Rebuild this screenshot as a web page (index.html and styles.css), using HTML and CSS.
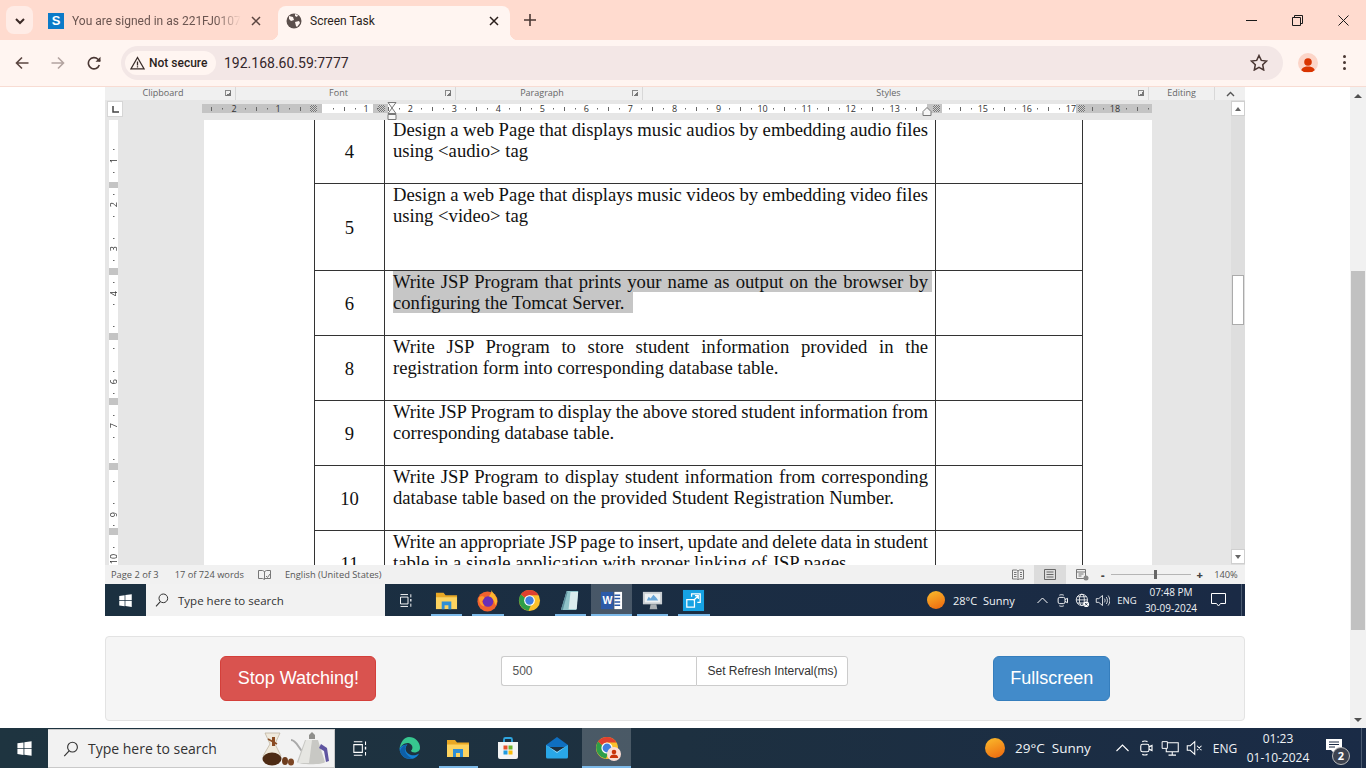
FILE: index.html
```html
<!DOCTYPE html>
<html lang="en">
<head>
  <meta charset="UTF-8">
  <meta name="viewport" content="width=device-width, initial-scale=1.0">
  <title>Screen Task</title>
  <link rel="stylesheet" href="styles.css">
</head>
<body>

  <!-- shared icons -->
  <svg class="sprite" aria-hidden="true">
    <symbol id="i-win" viewBox="0 0 24 24"><path fill="#fff" d="M2 4.6l8.6-1.2v8.2H2zM11.8 3.2L22 1.8v9.8H11.8zM2 12.8h8.6V21L2 19.8zM11.8 12.8H22v9.4l-10.2-1.4z"/></symbol>
    <symbol id="i-search" viewBox="0 0 24 24"><circle cx="14" cy="9.5" r="6.5" fill="none" stroke="currentColor" stroke-width="1.5"/><path d="M9.5 14.5L3 21.5" stroke="currentColor" stroke-width="1.6" fill="none"/></symbol>
    <symbol id="i-taskview" viewBox="0 0 24 24"><path fill="none" stroke="#fff" stroke-width="1.5" d="M4 2.5h12M4 21.5h12M4 6.5h12v11H4zM20.5 2v5M20.5 17v5"/><path stroke="#fff" stroke-width="2" d="M20.5 9.5v4"/></symbol>
    <symbol id="i-chrome" viewBox="0 0 24 24"><circle cx="12" cy="12" r="11" fill="#fbc02d"/><path fill="#2e9e49" d="M3 5.6l6 5 5 5-3 7A11 11 0 0 1 3 5.6z"/><path fill="#e0402f" d="M12 1a11 11 0 0 1 9.53 5.5H12a5.5 5.5 0 0 0-4.76 2.75L3 5.6A11 11 0 0 1 12 1z"/><circle cx="12" cy="12" r="5.6" fill="#fff"/><circle cx="12" cy="12" r="4.4" fill="#3f7fe0"/></symbol>
    <symbol id="i-folder" viewBox="0 0 24 24"><path fill="#e9a825" d="M1 4h8l2 2.5h12V9H1z"/><path fill="#fdd35f" d="M1 8.5h22V21H1z"/><path fill="#2f8fd6" d="M7 13h10v8h-3v-4h-4v4H7z"/></symbol>
    <symbol id="i-edge" viewBox="0 0 24 24"><path fill="#37c68f" d="M12 1a11 11 0 0 1 11 11c0 3-3 4.500-5.500 4.500-2 0-3.500-1-3.500-2 2-1 2.500-6-2.500-7.500-4-.5-7.500 2.500-9 6C3.500 6 7 1 12 1z"/><path fill="#1380d2" d="M2.500 12.500C2.500 18 7 23 13 23c4 0 7.500-2 9-5.500-3 2.500-8.500 2.500-11.500-.5-2.500-2.500-2.500-6 0-8.500-3.500 0-6.500 1.500-8 4z"/><path fill="#0e5fa8" d="M10.500 8.500c-3 2-3.500 6.500-.5 10 1.500 2 3.500 3.500 6 4-6 1.500-11-2-13-7 .5-3.500 4-7 7.500-7z"/></symbol>
    <symbol id="i-store" viewBox="0 0 24 24"><path fill="none" stroke="#2fa6e0" stroke-width="1.8" d="M8 6V3.500A1.500 1.500 0 0 1 9.500 2h5A1.500 1.500 0 0 1 16 3.500V6"/><path fill="#f4f4f4" d="M2 6h20v15a2 2 0 0 1-2 2H4a2 2 0 0 1-2-2z"/><path fill="#e8502a" d="M7.500 9.500h4v4h-4z"/><path fill="#6cb52d" d="M12.500 9.500h4v4h-4z"/><path fill="#1f9be0" d="M7.500 14.500h4v4h-4z"/><path fill="#fbbd09" d="M12.500 14.500h4v4h-4z"/></symbol>
    <symbol id="i-mail" viewBox="0 0 24 24"><path fill="#0f6fc0" d="M1 9l11-8 11 8v2H1z"/><path fill="#29a7e8" d="M1 9l11 7 11-7v12a1.500 1.500 0 0 1-1.500 1.500h-19A1.500 1.500 0 0 1 1 21z"/><path fill="#9fdcf8" d="M1 9l11 7 11-7-11 8z"/></symbol>
    <symbol id="i-firefox" viewBox="0 0 24 24"><circle cx="12" cy="13" r="10.500" fill="#f2622e"/><path fill="#fdb52e" d="M16 1c1 3 5 5 6 10 .5 3-1 5-2 6-1-6-4-9-7-9 2-2 3.500-4 3-7z"/><circle cx="12.500" cy="13" r="5.500" fill="#6b2fb5"/><path fill="#ff9a2e" d="M3 9c2-2 5-2 6 0l-3 4 3 5c-3 0-6-3-6-9z"/></symbol>
    <symbol id="i-note" viewBox="0 0 24 24"><path fill="#8fc3c9" d="M8 2h12l-2 20H2z"/><path fill="#dceced" d="M12 3h8l-1.500 18H10z"/><path fill="#5d8f9c" d="M2 22L8 2l1 1-5 19z"/></symbol>
    <symbol id="i-word" viewBox="0 0 24 24"><path fill="#2c5aa8" d="M1 3h13v18H1z"/><text x="2.500" y="16" font-family="Liberation Sans" font-size="11" font-weight="700" fill="#fff">W</text><path fill="#fff" d="M15 3h8v18h-8z"/><path stroke="#2c5aa8" stroke-width="1.500" d="M15 6.500h6M15 10h6M15 13.500h6M15 17h6"/></symbol>
    <symbol id="i-monitor" viewBox="0 0 24 24"><path fill="#c9ced2" d="M2 3h20v13H2z"/><path fill="#eef2f4" d="M4 5h16v9H4z"/><path fill="#6aa7d8" d="M6 12l2-4 2 2 3-4 3 3 2 3z"/><path fill="#aab0b4" d="M10 16h6l1 5H9z"/></symbol>
    <symbol id="i-remote" viewBox="0 0 24 24"><path fill="#17a2e3" d="M1 1h22v22H1z"/><path fill="none" stroke="#fff" stroke-width="1.300" d="M5 11h8v8H5zM10 8V5h9v9h-3M12 12l5-5M13.500 7H17v3.500"/></symbol>
    <symbol id="i-meet" viewBox="0 0 24 24"><rect x="5" y="7" width="11" height="10" rx="2.500" fill="none" stroke="#fff" stroke-width="1.500"/><path fill="none" stroke="#fff" stroke-width="1.500" d="M16 10.500l4-2v7l-4-2M7 3.500c2-1 5-1 7 0M7 20.500c2 1 5 1 7 0"/></symbol>
    <symbol id="i-globe" viewBox="0 0 24 24"><g fill="none" stroke="#fff" stroke-width="1.300"><circle cx="11" cy="11" r="9"/><ellipse cx="11" cy="11" rx="4" ry="9"/><path d="M2 11h18M3.500 6h15M3.500 16h15"/></g><circle cx="18" cy="18" r="4.500" fill="#fff"/><path stroke="#1b2b44" stroke-width="1.300" d="M16 16l4 4M20 16l-4 4"/></symbol>
    <symbol id="i-speaker" viewBox="0 0 24 24"><path fill="none" stroke="#fff" stroke-width="1.300" d="M2 9h4l6-5v16l-6-5H2zM15 9c1.500 2 1.500 4 0 6M18 6.500c2.500 3.500 2.500 7.500 0 11M21 4c3.500 5 3.500 11 0 16"/></symbol>
    <symbol id="i-mute" viewBox="0 0 24 24"><path fill="none" stroke="#fff" stroke-width="1.400" d="M3 9h4l6-5.500v17L7 15H3zM16 9l6 6M22 9l-6 6"/></symbol>
    <symbol id="i-net" viewBox="0 0 24 24"><path fill="none" stroke="#fff" stroke-width="1.400" d="M7 5h16v12H7zM15 17v4M10 21.500h10"/><path fill="#1b2b44" stroke="#fff" stroke-width="1.300" d="M1.500 3.500h7v9h-7z"/></symbol>
    <symbol id="i-sun" viewBox="0 0 24 24"><circle cx="12" cy="12" r="12" fill="url(#sun-fill)"/></symbol>
    <linearGradient id="sun-fill" x1="0.300" y1="0" x2="0.700" y2="1"><stop offset="0" stop-color="#f9b52a"/><stop offset="1" stop-color="#ee6c10"/></linearGradient>
  </svg>

  <!-- browser tabs -->
  <div class="tab-strip">
    <button class="tab-search"><svg width="10" height="7" viewBox="0 0 10 7"><path d="M1 1l4 4 4-4" fill="none" stroke="#3b2a26" stroke-width="2"/></svg></button>
    <div class="tab">
      <span class="favicon-s">S</span>
      <span class="tab-title tab-title-fade">You are signed in as 221FJ01071</span>
      <svg class="tab-close" viewBox="0 0 10 10"><path d="M1 1l8 8M9 1l-8 8" stroke="#5b4540" stroke-width="1.500"/></svg>
    </div>
    <div class="tab tab-active">
      <svg class="favicon" viewBox="0 0 16 16"><circle cx="8" cy="8" r="7.500" fill="#5b4f4c"/><path fill="#fff5f1" d="M3 3l4 1 1 3-3 1-2-2zM9 9l4-1 1 2-3 4-1-1zM9 1l3 1-1 2-2-1z"/></svg>
      <span class="tab-title">Screen Task</span>
      <svg class="tab-close" viewBox="0 0 10 10"><path d="M1 1l8 8M9 1l-8 8" stroke="#2b1f1c" stroke-width="1.500"/></svg>
    </div>
    <button class="tab-new"><svg width="12" height="12" viewBox="0 0 12 12"><path d="M6 0v12M0 6h12" stroke="#4a3733" stroke-width="1.600"/></svg></button>
    <div class="win-controls">
      <span class="win-btn"><svg width="11" height="11" viewBox="0 0 11 11"><path d="M0 5.500h11" stroke="#1a1a1a"/></svg></span>
      <span class="win-btn"><svg width="11" height="11" viewBox="0 0 11 11"><path d="M.5 2.500h8v8h-8zM2.500 2.500V.5h8v8h-2" fill="none" stroke="#1a1a1a"/></svg></span>
      <span class="win-btn"><svg width="11" height="11" viewBox="0 0 11 11"><path d="M.5.5l10 10M10.500.5l-10 10" stroke="#1a1a1a"/></svg></span>
    </div>
  </div>

  <!-- browser toolbar -->
  <div class="toolbar">
    <span class="nav-btn"><svg width="14" height="14" viewBox="0 0 14 14"><path d="M13.500 7H1.500M7 1.500L1.500 7 7 12.500" fill="none" stroke="#5b4540" stroke-width="1.600"/></svg></span>
    <span class="nav-btn"><svg width="14" height="14" viewBox="0 0 14 14"><path d="M.5 7h12M7 1.500L12.500 7 7 12.500" fill="none" stroke="#b3a3a0" stroke-width="1.600"/></svg></span>
    <span class="nav-btn"><svg width="14" height="14" viewBox="0 0 14 14"><path d="M12.300 9A5.600 5.600 0 1 1 11 3.300L13 5.200" fill="none" stroke="#4a3733" stroke-width="1.600"/><path d="M13.500.8v5h-5z" fill="#4a3733"/></svg></span>
    <div class="address">
      <span class="secure-pill">
        <svg width="15" height="14" viewBox="0 0 15 14"><path d="M7.500 1.500L14 12.800H1zM7.500 5.500v4M7.500 10.300v1.200" fill="none" stroke="#3a2d2a" stroke-width="1.300"/></svg>
        Not secure
      </span>
      <span class="url">192.168.60.59:7777</span>
      <svg class="star" width="18" height="17" viewBox="0 0 18 17"><path d="M9 1.500l2.300 4.900 5.200.7-3.800 3.600 1 5.300L9 13.400 4.300 16l1-5.300L1.500 7.100l5.200-.7z" fill="none" stroke="#4a3733" stroke-width="1.500"/></svg>
    </div>
    <span class="avatar"><svg width="16" height="15" viewBox="0 0 16 15"><circle cx="8" cy="4" r="3.800" fill="#d93400"/><path d="M1 14c0-4 3-5.500 7-5.500s7 1.500 7 5.500z" fill="#d93400"/></svg></span>
    <span class="kebab"><i></i><i></i><i></i></span>
  </div>

  <!-- page -->
  <div class="page">
    <div class="container">

      <!-- shared remote screen -->
      <div class="remote">
        <div class="ribbon">
          <div class="ribbon-group ribbon-clip"><span class="ribbon-label">Clipboard</span><i class="launcher"></i></div>
          <div class="ribbon-group ribbon-font"><span class="ribbon-label">Font</span><i class="launcher"></i></div>
          <div class="ribbon-group ribbon-para"><span class="ribbon-label">Paragraph</span><i class="launcher"></i></div>
          <div class="ribbon-group ribbon-styles"><span class="ribbon-label">Styles</span><i class="launcher"></i></div>
          <div class="ribbon-group ribbon-edit"><span class="ribbon-label">Editing</span></div>
          <div class="ribbon-collapse"><svg width="9" height="6" viewBox="0 0 9 6"><path d="M1 5l3.500-3.500L8 5" fill="none" stroke="#555" stroke-width="1.400"/></svg></div>
        </div>

        <div class="word-body">
          <div class="word-main">
            <div class="ruler-row">
              <span class="tab-corner"><svg width="7" height="7" viewBox="0 0 7 7"><path d="M1 0v6h6" fill="none" stroke="#444" stroke-width="1.500"/></svg></span>
              <div class="h-ruler">
                <span>2</span><span>1</span><span></span><span>1</span><span>2</span><span>3</span><span>4</span><span>5</span><span>6</span><span>7</span><span>8</span><span>9</span><span>10</span><span>11</span><span>12</span><span>13</span><span></span><span>15</span><span>16</span><span>17</span><span>18</span>
                <i class="col-mark col-mark-1"></i>
                <i class="col-mark col-mark-2"></i>
                <i class="col-mark col-mark-3"></i>
                <i class="col-mark col-mark-4"></i>
                <svg class="indent-left" width="10" height="19" viewBox="0 0 10 19"><path d="M1 .5h8L5 6zM5 6l4 5.500H1zM1 12.500h8v5H1z" fill="#f6f6f6" stroke="#777"/></svg>
                <svg class="indent-right" width="10" height="9" viewBox="0 0 10 9"><path d="M5 .5l4 4v4H1v-4z" fill="#f6f6f6" stroke="#777"/></svg>
              </div>
            </div>
            <div class="doc-row">
              <div class="v-ruler">
                <span>1</span><span>2</span><span>3</span><span>4</span><span></span><span>6</span><span>7</span><span></span><span>9</span><span>10</span>
              </div>
              <div class="doc-page">
                <table class="task-table">
                  <colgroup><col class="col-no"><col class="col-task"><col class="col-sign"></colgroup>
                  <tr class="row-md">
                    <td class="no">4</td>
                    <td class="task"><span class="ln">Design a web Page that displays music audios by embedding audio files</span> using &lt;audio&gt; tag</td>
                    <td></td>
                  </tr>
                  <tr class="row-lg">
                    <td class="no">5</td>
                    <td class="task"><span class="ln">Design a web Page that displays music videos by embedding video files</span> using &lt;video&gt; tag</td>
                    <td></td>
                  </tr>
                  <tr class="row-md">
                    <td class="no">6</td>
                    <td class="task"><span class="ln"><span class="sel">Write JSP Program that prints your name as output on the browser by</span></span> <span class="sel">configuring the Tomcat Server.&nbsp;</span></td>
                    <td></td>
                  </tr>
                  <tr class="row-md">
                    <td class="no">8</td>
                    <td class="task"><span class="ln">Write JSP Program to store student information provided in the</span> registration form into corresponding database table.</td>
                    <td></td>
                  </tr>
                  <tr class="row-md">
                    <td class="no">9</td>
                    <td class="task"><span class="ln">Write JSP Program to display the above stored student information from</span> corresponding database table.</td>
                    <td></td>
                  </tr>
                  <tr class="row-md">
                    <td class="no">10</td>
                    <td class="task"><span class="ln">Write JSP Program to display student information from corresponding</span> database table based on the provided Student Registration Number.</td>
                    <td></td>
                  </tr>
                  <tr class="row-md">
                    <td class="no">11</td>
                    <td class="task"><span class="ln">Write an appropriate JSP page to insert, update and delete data in student</span> table in a single application with proper linking of JSP pages.</td>
                    <td></td>
                  </tr>
                </table>
              </div>
            </div>
          </div>
          <div class="word-scroll">
            <span class="word-arrow"><i class="tri-up"></i></span>
            <span class="word-thumb"></span>
            <span class="word-arrow word-arrow-end"><i class="tri-down"></i></span>
          </div>
        </div>

        <div class="status-bar">
          <span class="status-page">Page 2 of 3</span>
          <span class="status-words">17 of 724 words</span>
          <svg class="status-proof" width="13" height="12" viewBox="0 0 13 12"><path d="M.5 1.500h4l2 1v8l-2-1h-4zM6.500 2.500l2-1h4v8h-6M8 7l1.500 1.500L12 5" fill="none" stroke="#777"/></svg>
          <span class="status-lang">English (United States)</span>
          <div class="status-right">
            <span class="view-btn"><svg width="12" height="11" viewBox="0 0 12 11"><path d="M.5 1h4l1.500 1 1.500-1h4v9h-4L6 11 4.500 10h-4zM6 2v8M2 3.500h2.500M2 5.500h2.500M2 7.500h2.500M8 3.500h2M8 5.500h2M8 7.500h2" fill="none" stroke="#777"/></svg></span>
            <span class="view-btn view-btn-on"><svg width="12" height="11" viewBox="0 0 12 11"><path d="M.5.5h11v10H.5zM2.500 3h7M2.500 5.500h7M2.500 8h7" fill="none" stroke="#666"/></svg></span>
            <span class="view-btn"><svg width="13" height="12" viewBox="0 0 13 12"><path d="M.5.5h9v9h-9zM.5 3h9M2.500 5h5M2.500 7h3" fill="none" stroke="#777"/><circle cx="10" cy="9" r="2.500" fill="#888"/></svg></span>
            <div class="zoom-ctl">
              <b>-</b>
              <span class="zoom-track"><i></i></span>
              <b>+</b>
            </div>
            <span class="zoom-pct">140%</span>
          </div>
        </div>

        <!-- taskbar of the shared machine -->
        <div class="taskbar taskbar-inner">
          <span class="tb-start"><svg><use href="#i-win"/></svg></span>
          <div class="tb-search">
            <svg class="tb-search-icon"><use href="#i-search"/></svg>
            <span>Type here to search</span>
          </div>
          <span class="tb-item tb-taskview"><svg><use href="#i-taskview"/></svg></span>
          <span class="tb-item tb-open"><svg><use href="#i-folder"/></svg></span>
          <span class="tb-item tb-open"><svg><use href="#i-firefox"/></svg></span>
          <span class="tb-item"><svg><use href="#i-chrome"/></svg></span>
          <span class="tb-item tb-open"><svg><use href="#i-note"/></svg></span>
          <span class="tb-item tb-open tb-active"><svg><use href="#i-word"/></svg></span>
          <span class="tb-item tb-open"><svg><use href="#i-monitor"/></svg></span>
          <span class="tb-item tb-open"><svg><use href="#i-remote"/></svg></span>
          <div class="tray">
            <svg class="tray-sun"><use href="#i-sun"/></svg>
            <span class="tray-weather">28°C&nbsp; Sunny</span>
            <span class="tray-icon"><svg width="11" height="7" viewBox="0 0 11 7"><path d="M.5 6l5-5 5 5" fill="none" stroke="#fff"/></svg></span>
            <span class="tray-icon"><svg class="tray-glyph"><use href="#i-meet"/></svg></span>
            <span class="tray-icon"><svg class="tray-glyph"><use href="#i-globe"/></svg></span>
            <span class="tray-icon"><svg class="tray-glyph"><use href="#i-speaker"/></svg></span>
            <span class="tray-lang">ENG</span>
            <span class="tray-clock">07:48 PM<br>30-09-2024</span>
            <span class="tray-notify"><svg width="15" height="14" viewBox="0 0 15 14"><path d="M.5.5h14v10H9.500l-2 2.500-2-2.500h-5z" fill="none" stroke="#fff"/></svg></span>
            <span class="tray-desktop"></span>
          </div>
        </div>
      </div>

      <!-- controls -->
      <div class="panel">
        <div class="panel-cell">
          <button class="btn btn-lg btn-stop">Stop Watching!</button>
        </div>
        <div class="panel-cell">
          <div class="input-group">
            <input type="text" value="500">
            <button class="btn btn-set">Set Refresh Interval(ms)</button>
          </div>
        </div>
        <div class="panel-cell">
          <button class="btn btn-lg btn-full">Fullscreen</button>
        </div>
      </div>
    </div>

    <div class="page-scroll">
      <span class="page-arrow"><i class="tri-up"></i></span>
      <span class="page-track"><span class="page-thumb"></span></span>
      <span class="page-arrow"><i class="tri-down"></i></span>
    </div>
  </div>

  <!-- windows taskbar -->
  <div class="taskbar taskbar-outer">
    <span class="tb-start"><svg><use href="#i-win"/></svg></span>
    <div class="tb-search">
      <svg class="tb-search-icon"><use href="#i-search"/></svg>
      <span>Type here to search</span>
      <svg class="tb-coffee" width="68" height="34" viewBox="0 0 68 34">
        <path d="M3 1h15l-5 11 6 12H1l7-12z" fill="#efe9dc" stroke="#b9ad98" stroke-width=".7"/>
        <path d="M10 5h3v9h-3z" fill="#8a4b22"/>
        <path d="M6 7l9 5" stroke="#8a4b22" stroke-width="1.500"/>
        <ellipse cx="10" cy="27" rx="9.500" ry="6.500" fill="#4d2a13"/>
        <ellipse cx="23" cy="29" rx="3" ry="4" fill="#6d3c1d"/>
        <ellipse cx="29" cy="30" rx="3" ry="3.500" fill="#7c4624"/>
        <path d="M29 8c5 0 7 7 11 11" fill="none" stroke="#a9a9a9" stroke-width="2"/>
        <path d="M43 8h13l7 22c-1 3-27 3-28 0z" fill="#c8c8c4"/>
        <path d="M44 8h6l-3 23h-11z" fill="#e6e6e2"/>
        <path d="M47 3l3-3 3 3v4h-6z" fill="#8f8f8c"/>
        <path d="M59 12l6 4 2 13-3 1-2-11-5-3z" fill="#5f55a0"/>
      </svg>
    </div>
    <span class="tb-item tb-taskview"><svg><use href="#i-taskview"/></svg></span>
    <span class="tb-item"><svg><use href="#i-edge"/></svg></span>
    <span class="tb-item tb-open"><svg><use href="#i-folder"/></svg></span>
    <span class="tb-item"><svg><use href="#i-store"/></svg></span>
    <span class="tb-item"><svg><use href="#i-mail"/></svg></span>
    <span class="tb-item tb-open tb-active tb-profile">
      <svg><use href="#i-chrome"/></svg>
      <svg class="tb-badge" viewBox="0 0 14 14"><circle cx="7" cy="7" r="7" fill="#fbdcd3"/><circle cx="7" cy="5" r="2.300" fill="#c9340a"/><path d="M2.800 11c0-2.500 2-3.500 4.200-3.500s4.200 1 4.200 3.500z" fill="#c9340a"/></svg>
    </span>
    <div class="tray">
      <svg class="tray-sun"><use href="#i-sun"/></svg>
      <span class="tray-weather">29°C&nbsp; Sunny</span>
      <span class="tray-icon"><svg width="13" height="8" viewBox="0 0 13 8"><path d="M.5 7l6-6 6 6" fill="none" stroke="#fff" stroke-width="1.100"/></svg></span>
      <span class="tray-icon"><svg class="tray-glyph"><use href="#i-meet"/></svg></span>
      <span class="tray-icon"><svg class="tray-glyph"><use href="#i-net"/></svg></span>
      <span class="tray-icon"><svg class="tray-glyph"><use href="#i-mute"/></svg></span>
      <span class="tray-lang">ENG</span>
      <span class="tray-clock">01:23<br>01-10-2024</span>
      <span class="tray-notify">
        <svg class="notify-icon" width="16" height="14" viewBox="0 0 16 14"><path d="M0 0h16v11h-5l-3 3-3-3H0z" fill="#fff"/><path d="M3 3h10M3 5.500h10M3 8h6" stroke="#1b2b44"/></svg>
        <b class="notify-count">2</b>
      </span>
      <span class="tray-desktop"></span>
    </div>
  </div>

</body>
</html>
```

FILE: styles.css
```css
html,
body {
  height: 100%;
}

body {
  margin: 0;
  height: 768px;
  overflow: hidden;
  display: flex;
  flex-direction: column;
  font-family: Roboto, "Liberation Sans", sans-serif;
  background-color: #fff;
}

.sprite {
  position: absolute;
  width: 0;
  height: 0;
}

button {
  font-family: inherit;
  cursor: pointer;
}

/* browser tabs */
.tab-strip {
  height: 40px;
  flex: none;
  display: flex;
  align-items: flex-end;
  background-color: #ffdbcf;
}

.tab-search {
  width: 27px;
  height: 28px;
  margin: 0 7px 6px 6px;
  padding: 0;
  border: none;
  border-radius: 8px;
  background-color: #ffece6;
}

.tab {
  width: 238px;
  height: 34px;
  box-sizing: border-box;
  padding: 0 15px 5px 8px;
  display: flex;
  align-items: center;
  gap: 8px;
  font-size: 12px;
  color: #6b5550;
}

.tab-active {
  position: relative;
  width: 232px;
  padding-right: 9px;
  border-radius: 8px 8px 0 0;
  background-color: #fff5f1;
  color: #2b1f1c;
}

.tab-active::before,
.tab-active::after {
  content: "";
  position: absolute;
  bottom: 0;
  width: 8px;
  height: 8px;
}

.tab-active::before {
  left: -8px;
  background: radial-gradient(circle at 0 0, transparent 8px, #fff5f1 8.5px);
}

.tab-active::after {
  right: -8px;
  background: radial-gradient(circle at 100% 0, transparent 8px, #fff5f1 8.5px);
}

.favicon-s {
  width: 16px;
  height: 16px;
  flex: none;
  background-color: #0b7ac8;
  color: #fff;
  font: 700 13px/16px "Liberation Sans", sans-serif;
  text-align: center;
}

.favicon {
  width: 16px;
  height: 16px;
  flex: none;
}

.tab-title {
  flex: 1;
  min-width: 0;
  white-space: nowrap;
  overflow: hidden;
}

.tab-title-fade {
  -webkit-mask-image: linear-gradient(to right, #000 85%, transparent 100%);
  mask-image: linear-gradient(to right, #000 85%, transparent 100%);
}

.tab-close {
  width: 10px;
  height: 10px;
  flex: none;
  margin: 0 2px;
}

.tab-new {
  width: 24px;
  height: 24px;
  margin: 0 0 8px 8px;
  padding: 0;
  border: none;
  background: none;
  display: flex;
  align-items: center;
  justify-content: center;
}

.win-controls {
  display: flex;
  align-self: stretch;
  margin-left: auto;
}

.win-btn {
  width: 46px;
  display: flex;
  align-items: center;
  justify-content: center;
}

/* browser toolbar */
.toolbar {
  height: 47px;
  flex: none;
  box-sizing: border-box;
  padding: 0 4px 1px;
  display: flex;
  align-items: center;
  background-color: #fff5f1;
  border-bottom: 1px solid #f8dcd3;
}

.nav-btn {
  width: 36px;
  height: 34px;
  flex: none;
  display: flex;
  align-items: center;
  justify-content: center;
}

.address {
  flex: 1;
  height: 34px;
  margin: 0 7px 0 9px;
  padding: 0 15px 0 4px;
  display: flex;
  align-items: center;
  border-radius: 17px;
  background-color: #f3e7e6;
}

.secure-pill {
  height: 24px;
  width: 91px;
  box-sizing: border-box;
  padding-left: 5px;
  display: flex;
  align-items: center;
  gap: 4px;
  border-radius: 12px;
  background-color: #fff5f1;
  font-size: 12px;
  font-weight: 500;
  color: #2b1f1c;
}

.url {
  margin-left: 8px;
  font-size: 14px;
  color: #33262a;
}

.star {
  margin-left: auto;
}

.avatar {
  width: 20px;
  height: 20px;
  margin: 0 8px;
  flex: none;
  display: flex;
  align-items: flex-end;
  justify-content: center;
  border-radius: 50%;
  background-color: #fcd5c8;
  overflow: hidden;
}

.kebab {
  width: 36px;
  flex: none;
  display: flex;
  flex-direction: column;
  align-items: center;
  gap: 3px;
}

.kebab i {
  width: 3px;
  height: 3px;
  border-radius: 50%;
  background-color: #4a3733;
}

/* page */
.page {
  height: 641px;
  flex: none;
  display: flex;
}

.container {
  width: 1140px;
  margin: 0 auto;
}

.page-scroll {
  width: 16px;
  flex: none;
  display: flex;
  flex-direction: column;
  background-color: #f1f1f1;
}

.page-arrow {
  height: 17px;
  flex: none;
  display: flex;
  align-items: center;
  justify-content: center;
}

.page-track {
  flex: 1;
}

.page-thumb {
  display: block;
  height: 359px;
  margin: 167px 1px 0;
  background-color: #c1c1c1;
}

.tri-up,
.tri-down {
  width: 0;
  height: 0;
  border-left: 4px solid transparent;
  border-right: 4px solid transparent;
}

.tri-up {
  border-bottom: 4px solid #505050;
}

.tri-down {
  border-top: 4px solid #505050;
}

/* remote screen */
.remote {
  height: 529px;
  display: flex;
  flex-direction: column;
  font-family: "Open Sans", "Liberation Sans", sans-serif;
  background-color: #e6e6e6;
}

.ribbon {
  height: 13px;
  flex: none;
  display: flex;
  background-color: #f0f0f0;
  color: #666;
  font-size: 9px;
  line-height: 11px;
}

.ribbon-group {
  display: flex;
  align-items: flex-start;
  box-sizing: border-box;
  border-right: 1px solid #d8d8d8;
}

.ribbon-clip { width: 131px; }
.ribbon-font { width: 220px; }
.ribbon-para { width: 187px; }
.ribbon-styles { width: 506px; }
.ribbon-edit { width: 66px; }

.ribbon-label {
  flex: 1;
  text-align: center;
}

.launcher {
  width: 6px;
  height: 6px;
  margin: 3px 4px 0;
  box-sizing: border-box;
  border-top: 1px solid #888;
  border-left: 1px solid #888;
  background: linear-gradient(135deg, transparent 50%, #777 50%);
}

.ribbon-collapse {
  flex: 1;
  display: flex;
  align-items: center;
  justify-content: center;
}

.word-body {
  height: 465px;
  flex: none;
  display: flex;
}

.word-main {
  flex: 1;
  min-width: 0;
  display: flex;
  flex-direction: column;
}

.ruler-row {
  height: 20px;
  flex: none;
  display: flex;
  align-items: flex-start;
}

.tab-corner {
  width: 14px;
  height: 14px;
  margin: 2px 0 0 3px;
  flex: none;
  display: flex;
  align-items: center;
  justify-content: center;
  background-color: #fff;
  box-shadow: 0 0 0 1px #d6d6d6;
}

.h-ruler {
  position: relative;
  width: 950px;
  height: 9px;
  margin: 4px 0 0 80px;
  flex: none;
  display: flex;
  padding-left: 10px;
  box-sizing: border-box;
  font-size: 9px;
  line-height: 9px;
  color: #333;
  background:
    repeating-linear-gradient(to right, transparent 0, transparent 10.5px, #666 10.5px, #666 11.5px, transparent 11.5px, transparent 22.025px) -12.05px 4px / 1000px 1.5px no-repeat,
    repeating-linear-gradient(to right, transparent 0, transparent 21.5px, #666 21.5px, #666 22.5px, transparent 22.5px, transparent 44.05px) -12.05px 2.5px / 1000px 4px no-repeat,
    linear-gradient(to right,
      #c4c4c4 0, #c4c4c4 120px,
      #fff 120px, #fff 171px,
      #c4c4c4 171px, #c4c4c4 186px,
      #fff 186px, #fff 725px,
      #c4c4c4 725px, #c4c4c4 740px,
      #fff 740px, #fff 874px,
      #c4c4c4 874px, #c4c4c4 950px);
}

.h-ruler span {
  width: 44.05px;
  flex: none;
  text-align: center;
}

.col-mark {
  position: absolute;
  top: 1px;
  width: 7px;
  height: 7px;
  background: repeating-conic-gradient(#777 0 25%, #cfcfcf 0 50%) 0 0 / 2px 2px;
}

.col-mark-1 { left: 108px; }
.col-mark-2 { left: 176px; }
.col-mark-3 { left: 731px; }
.col-mark-4 { left: 876px; }

.indent-left {
  position: absolute;
  left: 185px;
  top: -2px;
}

.indent-right {
  position: absolute;
  left: 720px;
  top: 3px;
}

.doc-row {
  height: 445px;
  flex: none;
  display: flex;
  overflow: hidden;
}

.v-ruler {
  width: 9px;
  height: 445px;
  margin-left: 4px;
  flex: none;
  box-sizing: border-box;
  padding-top: 19px;
  display: flex;
  flex-direction: column;
  overflow: hidden;
  font-size: 9px;
  line-height: 9px;
  color: #333;
  background:
    repeating-linear-gradient(to bottom, transparent 0, transparent 10.5px, #666 10.5px, #666 11.5px, transparent 11.5px, transparent 22.1px) 4px 19px / 1.5px 440px no-repeat,
    linear-gradient(to bottom,
      #fff 0, #fff 62px,
      #c4c4c4 62px, #c4c4c4 68px,
      #fff 68px, #fff 148px,
      #c4c4c4 148px, #c4c4c4 155px,
      #fff 155px, #fff 213px,
      #c4c4c4 213px, #c4c4c4 220px,
      #fff 220px, #fff 278px,
      #c4c4c4 278px, #c4c4c4 285px,
      #fff 285px, #fff 343px,
      #c4c4c4 343px, #c4c4c4 350px,
      #fff 350px, #fff 408px,
      #c4c4c4 408px, #c4c4c4 415px,
      #fff 415px);
}

.v-ruler span {
  height: 44.2px;
  flex: none;
  display: flex;
  align-items: center;
  justify-content: center;
  writing-mode: vertical-rl;
  transform: rotate(180deg);
}

.doc-page {
  width: 948px;
  margin-left: 86px;
  flex: none;
  overflow: hidden;
  background-color: #fff;
}

.task-table {
  width: 768px;
  margin: -2px 0 0 110px;
  border-collapse: collapse;
  table-layout: fixed;
  font-family: "Liberation Serif", serif;
  font-size: 18.67px;
  line-height: 21px;
  color: #111;
}

.col-no { width: 70px; }
.col-task { width: 551px; }
.col-sign { width: 147px; }

.task-table td {
  border: 1px solid #333;
  padding: 0;
}

.row-md { height: 65px; }
.row-lg { height: 87px; }

.task-table .no {
  text-align: center;
  vertical-align: middle;
}

.task-table .task {
  padding: 0 7px 0 8px;
  vertical-align: top;
}

/* first line of a cell, set tight and then stretched to the cell width */
.ln {
  display: block;
  text-align: justify;
  text-align-last: justify;
  word-spacing: -1.5px;
}

.sel {
  background-color: #c6c6c6;
  box-shadow: 4px 0 0 #c6c6c6;
  -webkit-box-decoration-break: clone;
  box-decoration-break: clone;
}

.word-scroll {
  width: 14px;
  flex: none;
  box-sizing: border-box;
  padding: 2px 1px;
  display: flex;
  flex-direction: column;
  background-color: #dedede;
}

.word-arrow {
  height: 13px;
  flex: none;
  display: flex;
  align-items: center;
  justify-content: center;
  background-color: #fff;
  box-shadow: 0 0 0 1px #cfcfcf;
}

.word-arrow .tri-up,
.word-arrow .tri-down {
  border-left-width: 3px;
  border-right-width: 3px;
  border-bottom-color: #666;
  border-top-color: #666;
}

.word-thumb {
  height: 50px;
  flex: none;
  margin-top: 160px;
  box-sizing: border-box;
  background-color: #fff;
  border: 1px solid #ababab;
}

.word-arrow-end {
  margin-top: auto;
}

.status-bar {
  height: 19px;
  flex: none;
  display: flex;
  align-items: center;
  box-sizing: border-box;
  padding-left: 6px;
  background-color: #f1f1f1;
  font-size: 9.3px;
  color: #555;
}

.status-words { margin-left: 16px; }
.status-proof { margin-left: 14px; }
.status-lang { margin-left: 14px; }

.status-right {
  margin-left: auto;
  display: flex;
  align-items: center;
  align-self: stretch;
}

.view-btn {
  width: 32px;
  display: flex;
  align-items: center;
  justify-content: center;
  align-self: stretch;
}

.view-btn-on {
  background-color: #dcdcdc;
}

.zoom-ctl {
  display: flex;
  align-items: center;
  gap: 6px;
  margin-left: 3px;
  font-size: 11px;
  font-weight: 600;
  color: #444;
}

.zoom-track {
  position: relative;
  width: 80px;
  height: 1px;
  background-color: #b5b5b5;
}

.zoom-track i {
  position: absolute;
  left: 43px;
  top: -4px;
  width: 3px;
  height: 9px;
  background-color: #666;
}

.zoom-pct {
  width: 38px;
  margin-left: 4px;
  text-align: center;
}

/* taskbars */
.taskbar {
  flex: none;
  display: flex;
  align-items: stretch;
  color: #f0f3f6;
  font-family: "Open Sans", "Liberation Sans", sans-serif;
}

.taskbar svg {
  display: block;
}

.tb-start,
.tb-item {
  position: relative;
  flex: none;
  display: flex;
  align-items: center;
  justify-content: center;
}

.tb-search {
  flex: none;
  display: flex;
  align-items: center;
  box-sizing: border-box;
  background-color: #f2f2f2;
  color: #333;
}

.tb-active {
  background-color: rgba(255, 255, 255, 0.2);
}

.tb-open::after {
  content: "";
  position: absolute;
  left: 5px;
  right: 5px;
  bottom: 0;
  height: 2px;
  background-color: #7cb9e8;
}

.tb-active::after {
  left: 0;
  right: 0;
}

.tray {
  margin-left: auto;
  display: flex;
  align-items: center;
  align-self: stretch;
}

.tray-icon,
.tray-notify {
  position: relative;
  flex: none;
  display: flex;
  align-items: center;
  justify-content: center;
}

.tray-weather,
.tray-lang,
.tray-clock {
  flex: none;
  white-space: nowrap;
}

.tray-lang,
.tray-clock {
  text-align: center;
}

.tray-desktop {
  flex: none;
  align-self: stretch;
  border-left: 1px solid #4a5a70;
}

.taskbar-inner {
  height: 32px;
  background: linear-gradient(to right, #1b3040, #1a2a45);
}

.taskbar-inner .tb-start { width: 41px; }
.taskbar-inner .tb-start svg { width: 15px; height: 15px; }

.taskbar-inner .tb-search {
  width: 239px;
  padding-left: 8px;
  gap: 8px;
  font-size: 11.5px;
}

.taskbar-inner .tb-search-icon { width: 16px; height: 16px; }
.taskbar-inner .tb-item { width: 41.2px; }
.taskbar-inner .tb-item svg { width: 23px; height: 23px; }
.taskbar-inner .tb-taskview svg { width: 15px; height: 15px; }
.taskbar-inner .tray-sun { width: 18px; height: 18px; margin-right: 8px; }
.taskbar-inner .tray-weather { width: 63px; font-size: 11px; margin-right: 16px; }
.taskbar-inner .tray-icon { width: 20px; }
.taskbar-inner .tray-glyph { width: 15px; height: 15px; }
.taskbar-inner .tray-lang { width: 30px; font-size: 9.5px; }
.taskbar-inner .tray-clock { width: 58px; font-size: 10px; line-height: 16px; }
.taskbar-inner .tray-notify { width: 36px; }
.taskbar-inner .tray-desktop { width: 3px; margin-left: 5px; }

.taskbar-outer {
  height: 40px;
  background: linear-gradient(to right, #1e3440 0, #1d3040 50%, #1a2b46 100%);
}

.taskbar-outer .tb-start { width: 48px; }
.taskbar-outer .tb-start svg { width: 17px; height: 17px; }

.taskbar-outer .tb-search {
  position: relative;
  width: 287px;
  margin-top: 1px;
  padding-left: 14px;
  gap: 8px;
  font-size: 14px;
  border: 1px solid #c9c9c9;
  border-width: 1px 1px 1px 0;
}

.taskbar-outer .tb-search-icon { width: 18px; height: 18px; }

.tb-coffee {
  margin-left: auto;
  margin-right: 4px;
}

.taskbar-outer .tb-item { width: 49.4px; }
.taskbar-outer .tb-item svg { width: 24px; height: 24px; }
.taskbar-outer .tb-taskview svg { width: 17px; height: 17px; }

.taskbar-outer .tb-item .tb-badge {
  position: absolute;
  left: 25px;
  top: 19px;
  width: 14px;
  height: 14px;
}

.taskbar-outer .tray-sun { width: 20px; height: 20px; margin-right: 10px; }
.taskbar-outer .tray-weather { width: 76px; font-size: 13.5px; margin-right: 19px; }
.taskbar-outer .tray-icon { width: 24px; }
.taskbar-outer .tray-glyph { width: 18px; height: 18px; }
.taskbar-outer .tray-lang { width: 38px; font-size: 12px; }
.taskbar-outer .tray-clock { width: 68px; font-size: 12px; line-height: 19px; }
.taskbar-outer .tray-notify { width: 44px; }
.taskbar-outer .tray-desktop { width: 4px; margin-left: 5px; }

.notify-icon {
  margin-top: -4px;
}

.notify-count {
  position: absolute;
  left: 20px;
  top: 4px;
  width: 16px;
  height: 16px;
  border: 1px solid #bbb;
  border-radius: 50%;
  background-color: #3d4350;
  font-size: 11px;
  line-height: 16px;
  font-weight: 700;
  text-align: center;
  color: #fff;
}

/* controls panel */
.panel {
  height: 85px;
  margin-top: 20px;
  box-sizing: border-box;
  padding: 19px 4px 0;
  display: grid;
  grid-template-columns: repeat(3, 1fr);
  justify-items: center;
  align-items: start;
  background-color: #f5f5f5;
  border: 1px solid #e3e3e3;
  border-radius: 4px;
  font-family: "Liberation Sans", Arial, sans-serif;
}

.btn {
  border: 1px solid transparent;
  border-radius: 4px;
  font-family: inherit;
}

.btn-lg {
  height: 45px;
  padding: 0 16px;
  border-radius: 6px;
  font-size: 18px;
  color: #fff;
}

.btn-stop {
  width: 156px;
  padding: 0;
  background-color: #d9534f;
  border-color: #d43f3a;
}

.btn-full {
  background-color: #428bca;
  border-color: #357ebd;
}

.input-group {
  width: 347px;
  height: 30px;
  display: flex;
}

.input-group input {
  width: 195px;
  box-sizing: border-box;
  padding: 0 10px;
  border: 1px solid #ccc;
  border-right: none;
  border-radius: 3px 0 0 3px;
  font-family: inherit;
  font-size: 12px;
  color: #555;
}

.btn-set {
  flex: 1;
  padding: 0;
  background-color: #fff;
  border-color: #ccc;
  border-radius: 0 3px 3px 0;
  font-size: 12px;
  color: #333;
}
```
